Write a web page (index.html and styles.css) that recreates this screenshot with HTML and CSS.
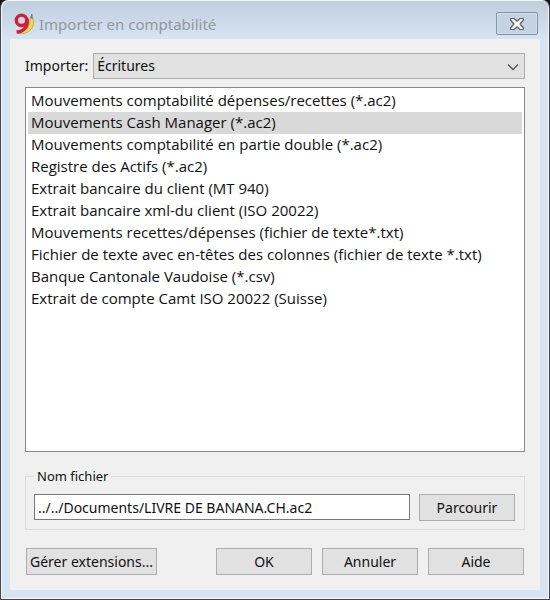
FILE: index.html
```html
<!DOCTYPE html>
<html lang="fr">
<head>
<meta charset="utf-8">
<title>Importer en comptabilité</title>
<link rel="stylesheet" href="styles.css">
</head>
<body>
<main class="window">
  <header class="titlebar">
    <svg class="logo" width="22" height="22" viewBox="0 0 22 22" aria-hidden="true">
      <path d="M18 3 C20.8 6 21.4 11 19 15 C16.500 19 11 21.500 5 20.500 C11 19 16.500 15 17 8 Z" fill="#f6d94e" stroke="#a98a2c" stroke-width="0.6"/>
      <path d="M17.800 5 L18.300 1 L19.400 1 L19.700 6 Z" fill="#6f7450"/>
      <circle cx="8.500" cy="7.300" r="5.200" fill="none" stroke="#cb203d" stroke-width="3.400"/>
      <path d="M13.600 5 C15.800 11 12.500 18.500 3.600 19" fill="none" stroke="#cb203d" stroke-width="3.400"/>
    </svg>
    <h1 class="title">Importer en comptabilité</h1>
    <button class="close" type="button" aria-label="Fermer">
      <svg width="16" height="14" viewBox="0 0 16 14" aria-hidden="true">
        <path d="M2 1.500 H5 L8 4.200 L11 1.500 H14 L14.500 3 L11 7 L14.500 11 L14 12.500 H11 L8 9.800 L5 12.500 H2 L1.500 11 L5 7 L1.500 3 Z" fill="#f8fafc" stroke="#5a606e" stroke-width="1.200" stroke-linejoin="round"/>
      </svg>
    </button>
  </header>
  <form class="content">
    <div class="source">
      <label for="source">Importer:</label>
      <div class="combo">
        <select id="source"><option>Écritures</option></select>
        <svg class="chevron" width="12" height="8" viewBox="0 0 12 8" aria-hidden="true"><path d="M1 1.500 L6 6.500 L11 1.500" fill="none" stroke="#555" stroke-width="1.300"/></svg>
      </div>
    </div>
    <select class="formats" size="16" aria-label="Format">
      <option>Mouvements comptabilité dépenses/recettes (*.ac2)</option>
      <option selected>Mouvements Cash Manager (*.ac2)</option>
      <option>Mouvements comptabilité en partie double (*.ac2)</option>
      <option>Registre des Actifs (*.ac2)</option>
      <option>Extrait bancaire du client (MT 940)</option>
      <option>Extrait bancaire xml-du client (ISO 20022)</option>
      <option>Mouvements recettes/dépenses (fichier de texte*.txt)</option>
      <option>Fichier de texte avec en-têtes des colonnes (fichier de texte *.txt)</option>
      <option>Banque Cantonale Vaudoise (*.csv)</option>
      <option>Extrait de compte Camt ISO 20022 (Suisse)</option>
    </select>
    <fieldset class="file">
      <legend><label for="file">Nom fichier</label></legend>
      <div class="file-row">
        <input id="file" type="text" value="../../Documents/LIVRE DE BANANA.CH.ac2">
        <button class="button" type="button">Parcourir</button>
      </div>
    </fieldset>
    <div class="actions">
      <button class="button extensions" type="button">Gérer extensions...</button>
      <button class="button" type="button">OK</button>
      <button class="button" type="button">Annuler</button>
      <button class="button" type="button">Aide</button>
    </div>
  </form>
</main>
</body>
</html>
```
FILE: styles.css
```css
* { box-sizing: border-box; }

body {
  margin: 0;
  background: #17171b;
  color: #111;
  font: 14px/20px "Noto Sans", "Open Sans", sans-serif;
}

button, input, select { font: inherit; color: inherit; border-radius: 0; }

.window {
  display: flex;
  flex-direction: column;
  min-height: 100vh;
  padding: 0 9px 9px;
  border: 1px solid #46464c;
  border-width: 0 1px 1px 1px;
  border-radius: 8px 8px 0 0;
  background: linear-gradient(#bfcddc, #d7e4f2 39px);
  box-shadow: inset 1px 1px #f3f6fa, inset -1px -1px #f3f6fa;
}

.titlebar {
  display: flex;
  align-items: center;
  height: 39px;
  padding: 8px 2px 0 3px;
}

.title {
  flex: 1;
  margin: 0 0 0 4px;
  color: #92989f;
  font: 15px/20px "Noto Sans", "Open Sans", sans-serif;
}

.close {
  display: flex;
  align-items: center;
  justify-content: center;
  width: 42px;
  height: 23px;
  padding: 0;
  border: 1px solid #8291ab;
  border-radius: 2px;
  background: #c5d2e2;
  box-shadow: inset 0 0 0 1px #d3deea;
}

.content {
  flex: 1;
  display: flex;
  flex-direction: column;
  padding: 14px 15px 15px;
  background: #f0f0f0;
}

.source {
  display: flex;
  align-items: center;
  gap: 5px;
}

.combo { position: relative; flex: 1; }

.combo select {
  display: block;
  appearance: none;
  width: 100%;
  height: 26px;
  padding: 0 24px 0 3px;
  border: 1px solid #adadad;
  background: #e1e1e1;
}

.chevron {
  position: absolute;
  top: 10px;
  right: 6px;
  pointer-events: none;
}

.formats {
  flex: 1;
  margin-top: 8px;
  padding: 2px;
  border: 1px solid #828790;
  background: #fff;
  outline: 0;
  overflow: hidden;
  font: 15px/22px "Open Sans", "Noto Sans", sans-serif;
}

.formats option {
  min-height: 22px;
  padding: 0 3px;
}

.formats option:checked {
  background: #d9d9d9 linear-gradient(#d9d9d9, #d9d9d9);
  color: #111;
}

.file {
  min-width: 0;
  margin: 14px 0 0;
  padding: 8px 9px 8px 8px;
  border: 1px solid #dcdcdc;
}

.file legend { padding: 0 3px; font-size: 13px; }

.file-row {
  display: flex;
  align-items: flex-start;
  gap: 9px;
}

.file input {
  flex: 1;
  min-width: 0;
  height: 26px;
  padding: 0 3px;
  border: 1px solid #7a7a7a;
  background: #fff;
}

.button {
  width: 96px;
  height: 27px;
  padding: 0;
  border: 1px solid #adadad;
  background: #e1e1e1;
}

.actions {
  display: flex;
  gap: 10px;
  margin: 18px 0 0;
  padding: 0 1px;
}

.extensions { width: 131px; margin-right: auto; }
```
